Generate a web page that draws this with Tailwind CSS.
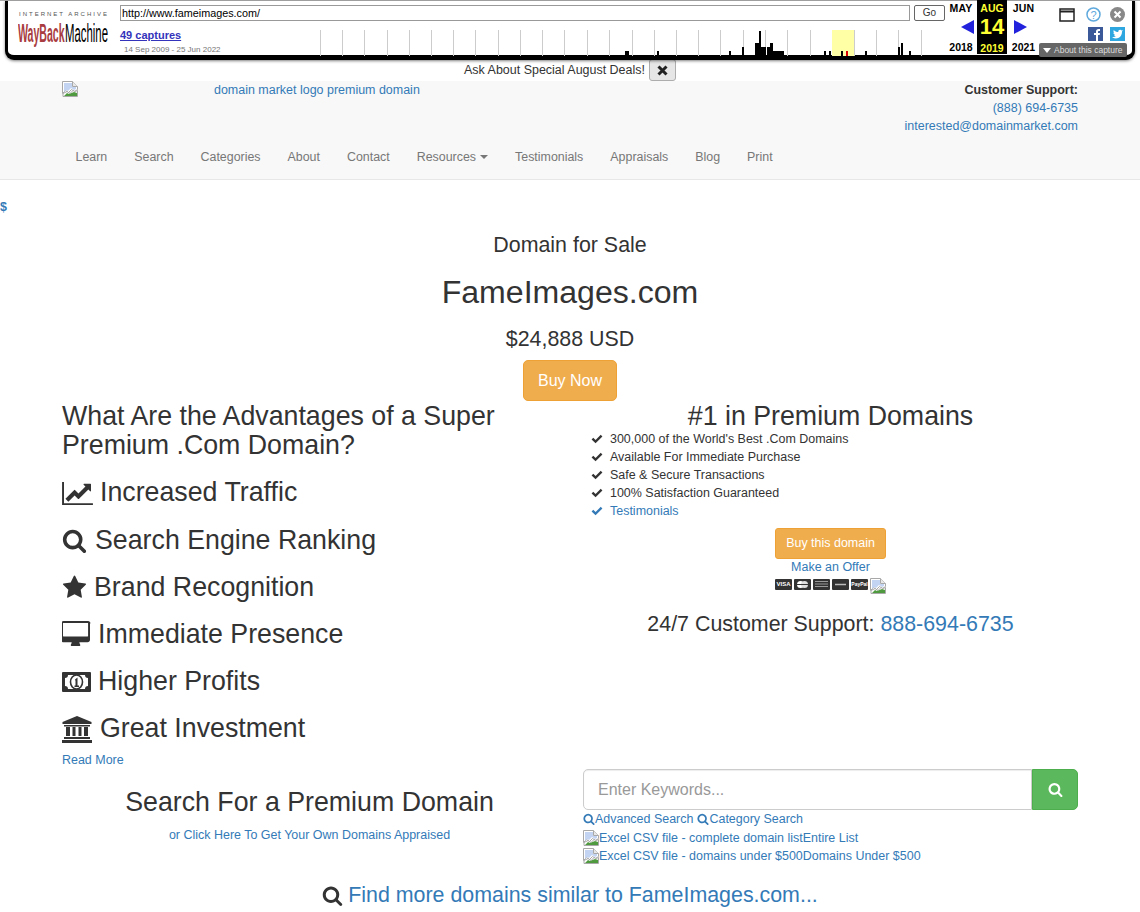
<!DOCTYPE html>
<html lang="en">
<head>
    <meta charset="UTF-8">
    <title>FameImages.com</title>
    <meta name="viewport" content="width=device-width, initial-scale=1.0">
    <script src="https://cdn.jsdelivr.net/npm/@tailwindcss/browser@4"></script>
</head>
<body class="h-[912px] overflow-hidden bg-white text-[#333] text-[12.480px] leading-[18px] font-['Liberation_Sans',Arial,sans-serif]">
    <svg class="hidden">
        <symbol id="broken" viewBox="0 0 16 16">
            <path d="M.5.5h10l5 5v3l-3 2-3-2-3 3-3-2-3 3z" fill="#fff" stroke="#a8a8a8"/>
            <path d="M2 2h8v4h4v2l-2 1-3-2-3 3-2-1-2 2z" fill="#c3d4f2"/>
            <path d="M10.500.5v5h5" fill="#e8e8e8" stroke="#a8a8a8"/>
            <path d="M1 15.500v-3l4-2 3 2 3-3 2 1 2.500-1v6z" fill="#fff" stroke="#a8a8a8"/>
            <path d="M2 15l3-3 2 1 5-2 3 1v3z" fill="#4f9a3f"/>
        </symbol>
        <symbol id="search" viewBox="0 0 1792 1792">
            <path d="M1216 832q0-185-131.500-316.500t-316.500-131.500-316.500 131.500-131.500 316.500 131.500 316.500 316.500 131.500 316.500-131.500 131.500-316.500zm512 832q0 52-38 90t-90 38q-54 0-90-38l-343-342q-179 124-399 124-143 0-273.500-55.500t-225-150-150-225-55.500-273.500 55.500-273.500 150-225 225-150 273.500-55.500 273.500 55.500 225 150 150 225 55.500 273.500q0 220-124 399l343 343q37 37 37 90z" fill="currentColor"/>
        </symbol>
        <symbol id="check" viewBox="0 0 14 12">
            <path d="M.5 6.500l2-2 2.800 2.800L11.500 1l2 2-8.200 8.200z" fill="currentColor"/>
        </symbol>
    </svg>

    <!-- wayback toolbar -->
    <div class="h-[60px] px-[5px] border-t border-[#aaa]">
        <div class="relative flex h-[59px] bg-white border-x-[3px] border-b-[5px] border-black rounded-b-[9px] shadow-[0_1px_3px_rgba(0,0,0,0.5)]">
            <div class="w-[112px] shrink-0 pl-[10px] pt-[9px]">
                <div class="pl-[1px] text-[6px] leading-[8px] tracking-[2px] text-[#555] whitespace-nowrap">INTERNET ARCHIVE</div>
                <div class="flex h-[26px] w-[92px] mt-[2px] font-bold text-[25px] leading-[26px] whitespace-nowrap">
                    <span class="inline-block w-[47px] shrink-0 origin-left scale-x-[0.423] text-[#a83c41]">WayBack</span>
                    <span class="inline-block w-[43px] shrink-0 origin-left scale-x-[0.455] text-black font-normal">Machine</span>
                </div>
            </div>
            <div class="w-[825px] shrink-0 pt-[4px]">
                <div class="flex gap-[4px]">
                    <div class="w-[790px] h-[16px] border border-[#999] px-[1px] text-[10.800px] leading-[14px] text-black">http://www.fameimages.com/</div>
                    <div class="w-[31px] h-[16px] border border-[#666] rounded-[2px] text-center text-[10px] leading-[14px]">Go</div>
                </div>
                <div class="flex h-[30px] mt-[5px]">
                    <div class="w-[200px] pt-[3px]">
                        <a class="block text-[11px] leading-[13px] font-bold text-[#3333bb] underline">49 captures</a>
                        <div class="pl-[4px] mt-[2px] text-[8px] leading-[11px] text-[#777]">14 Sep 2009 - 25 Jun 2022</div>
                    </div>
                    <svg class="w-[625px] h-[30px]" viewBox="0 0 625 30">
                        <rect x="512" y="4" width="22" height="26" fill="#ffffa5"/>
                        <g fill="#ccc">
                            <rect x="0" y="4" width="1" height="26"/><rect x="22" y="4" width="1" height="26"/><rect x="44" y="4" width="1" height="26"/><rect x="67" y="4" width="1" height="26"/><rect x="89" y="4" width="1" height="26"/><rect x="111" y="4" width="1" height="26"/><rect x="133" y="4" width="1" height="26"/><rect x="155" y="4" width="1" height="26"/><rect x="178" y="4" width="1" height="26"/><rect x="200" y="4" width="1" height="26"/><rect x="222" y="4" width="1" height="26"/><rect x="244" y="4" width="1" height="26"/><rect x="267" y="4" width="1" height="26"/><rect x="289" y="4" width="1" height="26"/><rect x="312" y="4" width="1" height="26"/><rect x="334" y="4" width="1" height="26"/><rect x="356" y="4" width="1" height="26"/><rect x="378" y="4" width="1" height="26"/><rect x="400" y="4" width="1" height="26"/><rect x="423" y="4" width="1" height="26"/><rect x="445" y="4" width="1" height="26"/><rect x="467" y="4" width="1" height="26"/><rect x="490" y="4" width="1" height="26"/><rect x="534" y="4" width="1" height="26"/><rect x="556" y="4" width="1" height="26"/><rect x="578" y="4" width="1" height="26"/><rect x="601" y="4" width="1" height="26"/>
                        </g>
                        <g fill="#000">
                            <rect x="305" y="25" width="4" height="5"/><rect x="337" y="25" width="2" height="5"/><rect x="409" y="25" width="2" height="5"/><rect x="422" y="21" width="2" height="9"/><rect x="435" y="17" width="4" height="13"/><rect x="439" y="5" width="2" height="25"/><rect x="441" y="21" width="5" height="9"/><rect x="447" y="21" width="3" height="9"/><rect x="450" y="17" width="3" height="13"/><rect x="453" y="25" width="11" height="5"/><rect x="504" y="25" width="2" height="5"/><rect x="509" y="25" width="2" height="5"/><rect x="521" y="25" width="2" height="5"/><rect x="545" y="25" width="2" height="5"/><rect x="578" y="21" width="2" height="9"/><rect x="581" y="17" width="2" height="13"/><rect x="589" y="25" width="2" height="5"/>
                        </g>
                        <rect x="526" y="25" width="2" height="5" fill="#d00"/>
                    </svg>
                </div>
            </div>
            <div class="flex shrink-0 font-bold text-center text-black">
                <div class="w-[32px] flex flex-col items-center pt-[1px]">
                    <div class="text-[10.500px] leading-[13px] tracking-[0.2px]">MAY</div>
                    <svg class="w-[14px] h-[14px] mt-[5px] ml-[14px]" viewBox="0 0 14 14"><path d="M0 7L13 0v14z" fill="#2222dd"/></svg>
                    <div class="text-[10.500px] leading-[12px] mt-[7px]">2018</div>
                </div>
                <div class="w-[30px] h-[54px] -mt-[1px] flex flex-col items-center bg-black text-[#ffff33] pt-[2px]">
                    <div class="text-[10.500px] leading-[13px]">AUG</div>
                    <div class="text-[22px] leading-[24px]">14</div>
                    <div class="text-[10.500px] leading-[12px] mt-[3px]">2019</div>
                </div>
                <div class="w-[33px] flex flex-col items-center pt-[1px]">
                    <div class="text-[10.500px] leading-[13px] tracking-[0.2px]">JUN</div>
                    <svg class="w-[14px] h-[14px] mt-[5px] -ml-[8px]" viewBox="0 0 14 14"><path d="M14 7L1 0v14z" fill="#2222dd"/></svg>
                    <div class="text-[10.500px] leading-[12px] mt-[7px]">2021</div>
                </div>
            </div>
            <div class="flex flex-col gap-[5px] pt-[6px] pl-[19px]">
                <div class="flex items-center">
                    <svg class="w-[16px] h-[14px]" viewBox="0 0 16 14"><path d="M1 1h14v12H1z" fill="#fff" stroke="#222" stroke-width="1.500"/><path d="M1 2.500h14v2H1z" fill="#222"/></svg>
                    <svg class="w-[15px] h-[15px] ml-[11px]" viewBox="0 0 15 15"><circle cx="7.500" cy="7.500" r="6.500" fill="#fff" stroke="#5fa9dd" stroke-width="1.500"/><text x="7.500" y="11.500" text-anchor="middle" font-size="11" fill="#5fa9dd" font-weight="400">?</text></svg>
                    <svg class="w-[15px] h-[15px] ml-[9px]" viewBox="0 0 15 15"><circle cx="7.500" cy="7.500" r="7.500" fill="#888"/><path d="M4.500 4.500l6 6m0-6l-6 6" stroke="#fff" stroke-width="2"/></svg>
                </div>
                <div class="flex justify-end gap-[7px] w-[66px]">
                    <svg class="w-[15px] h-[14px]" viewBox="0 0 15 14"><rect width="15" height="14" fill="#3b5998"/><path d="M8 14V8H6V6h2V4.500C8 3 9 2 10.500 2H12v2h-1c-.600 0-1 .300-1 1v1h2l-.300 2H10v6z" fill="#fff"/></svg>
                    <svg class="w-[15px] h-[14px]" viewBox="0 0 15 14"><rect width="15" height="14" fill="#2ea7e0"/><path d="M2.500 10.500c4 2.300 9.500.500 9.500-6l1-1.200-1.300.3c-1-1.400-3.700-.800-3.400 1.500-1.800 0-3.300-.8-4.500-2.200-.600 1.200-.300 2.300.600 3l-1-.2c0 1 .700 1.900 1.700 2.200h-1c.300.800 1 1.300 2 1.400-1 .700-2.400 1-3.600.7z" fill="#fff"/></svg>
                </div>
            </div>
            <div class="absolute left-[1031px] top-[42px] flex items-center gap-[3px] w-[88px] h-[14px] rounded-[2px] bg-[#666] pl-[4px] text-[8.500px] leading-[14px] text-[#ddd] whitespace-nowrap">
                <span class="w-0 h-0 border-x-[4px] border-t-[5px] border-x-transparent border-t-white"></span>About this capture
            </div>
        </div>
    </div>

    <!-- deals -->
    <div class="flex justify-center items-start gap-[4px] h-[21px]">
        <span class="pt-[1px]">Ask About Special August Deals!</span>
        <span class="w-[27px] h-[22px] -mt-[1px] flex items-center justify-center rounded-[3px] border border-[#adadad] bg-[#e6e6e6] text-black">
            <svg class="w-[11px] h-[11px]" viewBox="0 0 11 11"><path d="M1.500 1.500l8 8m0-8l-8 8" stroke="#222" stroke-width="3"/></svg>
        </span>
    </div>

    <!-- navbar -->
    <div class="h-[99px] bg-[#f8f8f8] border-b border-[#e7e7e7] px-[62px]">
        <div class="flex justify-between h-[53px]">
            <a class="flex text-[#337ab7]">
                <svg class="w-[16px] h-[16px]"><use href="#broken"/></svg>
                <span class="ml-[136px]">domain market logo premium domain</span>
            </a>
            <div class="text-right">
                <div class="font-bold">Customer Support:</div>
                <div class="text-[#337ab7]">(888) 694-6735</div>
                <div class="text-[#337ab7]">interested@domainmarket.com</div>
            </div>
        </div>
        <div class="flex h-[45px] items-center text-[#777] text-[12.420px]">
            <a class="px-[13.500px]">Learn</a>
            <a class="px-[13.500px]">Search</a>
            <a class="px-[13.500px]">Categories</a>
            <a class="px-[13.500px]">About</a>
            <a class="px-[13.500px]">Contact</a>
            <a class="px-[13.500px] flex items-center gap-[4px]">Resources <span class="w-0 h-0 border-x-[4px] border-t-[4px] border-x-transparent border-t-[#777]"></span></a>
            <a class="px-[13.500px]">Testimonials</a>
            <a class="px-[13.500px]">Appraisals</a>
            <a class="px-[13.500px]">Blog</a>
            <a class="px-[13.500px]">Print</a>
        </div>
    </div>

    <div class="mt-[18px] text-[#337ab7] font-bold">$</div>

    <!-- domain heading -->
    <div class="flex flex-col items-center">
        <div class="mt-[17px] text-[21.400px] leading-[24px]">Domain for Sale</div>
        <div class="mt-[17px] text-[32.100px] leading-[36px]">FameImages.com</div>
        <div class="mt-[17px] text-[21.400px] leading-[24px]">$24,888 USD</div>
        <a class="mt-[9px] w-[94px] h-[41px] rounded-[5px] bg-[#f0ad4e] border border-[#eea236] text-white text-center text-[16px] leading-[39px]">Buy Now</a>
    </div>

    <div class="grid grid-cols-2 gap-x-[26px] px-[62px]">
        <!-- advantages -->
        <div class="pt-[1px]">
            <h2 class="text-[26.750px] leading-[29.200px]">What Are the Advantages of a Super Premium .Com Domain?</h2>
            <div class="flex flex-col gap-[17.500px] mt-[18px] text-[26.750px] leading-[29.700px]">
                <div class="flex items-center gap-[7px]">
                    <svg class="w-[31px] h-[27px]" viewBox="0 0 2048 1792"><path d="M2048 1536v128h-2048v-1536h128v1408h1920zm-128-1248v435q0 21-19.500 29.500t-35.500-7.500l-121-121-633 633q-10 10-23 10t-23-10l-233-233-416 416-192-192 585-585q10-10 23-10t23 10l233 233 464-464-121-121q-16-16-7.500-35.500t29.500-19.500h435q14 0 23 9t9 23z" fill="#333"/></svg>
                    <span>Increased Traffic</span>
                </div>
                <div class="flex items-center gap-[8px]">
                    <svg class="w-[25px] h-[25px] mt-[1px]"><use href="#search"/></svg>
                    <span>Search Engine Ranking</span>
                </div>
                <div class="flex items-center gap-[7px]">
                    <svg class="w-[25px] h-[25px]" viewBox="0 0 1792 1792"><path d="M1728 650q0 22-26 48l-363 354 86 500q1 7 1 20 0 21-10.500 35.500t-30.500 14.500q-19 0-40-12l-449-236-449 236q-22 12-40 12-21 0-31.500-14.500t-10.500-35.500q0-6 2-20l86-500-364-354q-25-27-25-48 0-37 56-46l502-73 225-455q19-41 49-41t49 41l225 455 502 73q56 9 56 46z" fill="#333"/></svg>
                    <span>Brand Recognition</span>
                </div>
                <div class="flex items-center gap-[7px]">
                    <svg class="w-[29px] h-[27px]" viewBox="0 0 1920 1792"><path d="M1728 992v-832q0-13-9.500-22.500t-22.500-9.500h-1600q-13 0-22.500 9.500t-9.500 22.500v832q0 13 9.500 22.500t22.500 9.500h1600q13 0 22.500-9.500t9.500-22.500zm128-832v1088q0 66-47 113t-113 47h-544q0 37 16 77.500t32 71 16 43.500q0 26-19 45t-45 19h-512q-26 0-45-19t-19-45q0-14 16-44t32-70 16-78h-544q-66 0-113-47t-47-113v-1088q0-66 47-113t113-47h1632q66 0 113 47t47 113z" fill="#333"/></svg>
                    <span>Immediate Presence</span>
                </div>
                <div class="flex items-center gap-[7px]">
                    <svg class="w-[29px] h-[20px]" viewBox="0 0 29 20">
                        <path fill-rule="evenodd" d="M1 0h27a1 1 0 0 1 1 1v18a1 1 0 0 1-1 1H1a1 1 0 0 1-1-1V1a1 1 0 0 1 1-1zm5 3a3 3 0 0 1-3 3v8a3 3 0 0 1 3 3h17a3 3 0 0 1 3-3V6a3 3 0 0 1-3-3z" fill="#333"/>
                        <ellipse cx="14.500" cy="10" rx="6" ry="7" fill="#fff" stroke="#333" stroke-width="1.600"/>
                        <path d="M13 7.500l2.500-2v8h1.500V15h-4.500v-1.500h1V9z" fill="#333"/>
                    </svg>
                    <span>Higher Profits</span>
                </div>
                <div class="flex items-center gap-[8px]">
                    <svg class="w-[30px] h-[27px]" viewBox="0 0 30 27">
                        <path d="M15 0l14.500 6v2H.5V6z" fill="#333"/>
                        <path d="M2 9h26v1.500H2zM4 11h4v9H4zM10.500 11h3v9h-3zM16.500 11h3v9h-3zM22 11h4v9h-4zM2 21h26v2H2zM0 24h30v3H0z" fill="#333"/>
                    </svg>
                    <span>Great Investment</span>
                </div>
            </div>
            <a class="block mt-[7px] text-[#337ab7]">Read More</a>
        </div>

        <!-- premium -->
        <div class="pt-[1px]">
            <h2 class="text-center text-[26.750px] leading-[29.700px]">#1 in Premium Domains</h2>
            <ul class="pl-[8px] -mt-[2px]">
                <li class="flex items-center"><svg class="w-[12px] h-[10px] mr-[7px]"><use href="#check"/></svg>300,000 of the World's Best .Com Domains</li>
                <li class="flex items-center"><svg class="w-[12px] h-[10px] mr-[7px]"><use href="#check"/></svg>Available For Immediate Purchase</li>
                <li class="flex items-center"><svg class="w-[12px] h-[10px] mr-[7px]"><use href="#check"/></svg>Safe &amp; Secure Transactions</li>
                <li class="flex items-center"><svg class="w-[12px] h-[10px] mr-[7px]"><use href="#check"/></svg>100% Satisfaction Guaranteed</li>
                <li class="flex items-center text-[#337ab7]"><svg class="w-[12px] h-[10px] mr-[7px]"><use href="#check"/></svg>Testimonials</li>
            </ul>
            <div class="flex flex-col items-center mt-[8px]">
                <a class="w-[111px] h-[31px] rounded-[3px] bg-[#f0ad4e] border border-[#eea236] text-white text-center leading-[29px]">Buy this domain</a>
                <a class="text-[#337ab7] -mt-[1px]">Make an Offer</a>
                <div class="flex gap-[2px] h-[18px] items-center">
                    <span class="w-[17px] h-[11px] rounded-[1px] bg-[#333] text-white text-[6px] leading-[11px] font-bold text-center">VISA</span>
                    <svg class="w-[17px] h-[11px]" viewBox="0 0 17 11"><rect width="17" height="11" rx="1" fill="#333"/><circle cx="6.500" cy="5.500" r="3.500" fill="#fff"/><circle cx="10.500" cy="5.500" r="3.500" fill="#ddd"/><rect x="3" y="5" width="11" height="1" fill="#333"/></svg>
                    <svg class="w-[17px] h-[11px]" viewBox="0 0 17 11"><rect width="17" height="11" rx="1" fill="#333"/><path d="M2 2.500h13M2 5h13M2 7.500h13" stroke="#999"/></svg>
                    <svg class="w-[17px] h-[11px]" viewBox="0 0 17 11"><rect width="17" height="11" rx="1" fill="#333"/><path d="M3 5.500h11" stroke="#bbb" stroke-width="1.500"/></svg>
                    <span class="w-[17px] h-[11px] rounded-[1px] bg-[#333] text-white text-[5px] leading-[11px] font-bold text-center overflow-hidden">PayPal</span>
                    <svg class="w-[16px] h-[16px] mt-[3px]"><use href="#broken"/></svg>
                </div>
            </div>
            <div class="mt-[18px] text-center text-[21.400px] leading-[24px]">24/7 Customer Support: <a class="text-[#337ab7]">888-694-6735</a></div>
        </div>

        <!-- search row -->
        <div class="text-center pt-[19px]">
            <h2 class="text-[26.750px] leading-[29.700px]">Search For a Premium Domain</h2>
            <a class="block mt-[8px] text-[#337ab7]">or Click Here To Get Your Own Domains Appraised</a>
        </div>
        <div class="text-[#337ab7]">
            <div class="flex h-[41px]">
                <div class="flex-1 rounded-l-[5px] border border-[#ccc] px-[14px] text-[16px] leading-[39px] text-[#999] shadow-[inset_0_1px_1px_rgba(0,0,0,0.075)]">Enter Keywords...</div>
                <div class="w-[46px] flex items-center justify-center rounded-r-[5px] bg-[#5cb85c] border border-[#4cae4c]">
                    <svg class="w-[15px] h-[15px] text-white"><use href="#search"/></svg>
                </div>
            </div>
            <div class="flex items-center">
                <svg class="w-[12px] h-[12px]"><use href="#search"/></svg>Advanced Search
                <svg class="w-[12px] h-[12px] ml-[4px]"><use href="#search"/></svg>Category Search
            </div>
            <div class="flex items-center mt-[1px]"><svg class="w-[16px] h-[16px]"><use href="#broken"/></svg>Excel CSV file - complete domain listEntire List</div>
            <div class="flex items-center"><svg class="w-[16px] h-[16px]"><use href="#broken"/></svg>Excel CSV file - domains under $500Domains Under $500</div>
        </div>
    </div>

    <div class="flex justify-center items-center gap-[5px] mt-[18px] text-[21.400px] leading-[24px] text-[#337ab7]">
        <svg class="w-[21px] h-[21px] text-[#333]"><use href="#search"/></svg>
        <span>Find more domains similar to FameImages.com...</span>
    </div>
</body>
</html>
